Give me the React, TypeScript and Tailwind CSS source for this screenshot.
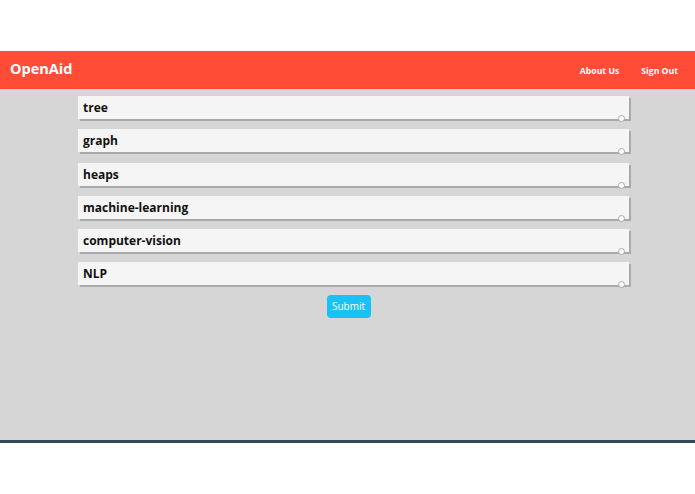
const topics = ["tree", "graph", "heaps", "machine-learning", "computer-vision", "NLP"];

function TopicBox({ label }: { label: string }) {
  return (
    <div className="relative h-[23px] w-[551px] bg-[#f5f5f5] pl-[5px] shadow-[2px_2px_0_#a9a9a9]">
      <span className="block text-[12px] font-bold leading-[24px] text-[#111]">{label}</span>
      <span className="absolute -bottom-[3px] right-[4px] h-[7px] w-[7px] rounded-full border border-[#a9a9a9] bg-white" />
    </div>
  );
}

export default function App() {
  return (
    <div className="h-[494px] w-[695px] bg-white font-['Open_Sans',sans-serif]">
      <div className="h-[51px]" />
      <header className="flex h-[38px] items-center justify-between bg-[#fe4c37] pl-[10px] pr-[17px] text-white">
        <span className="-mt-[2px] text-[14.5px] font-bold">OpenAid</span>
        <nav className="mt-[3px] flex gap-[22px] text-[8.7px] font-bold">
          <span>About Us</span>
          <span>Sign Out</span>
        </nav>
      </header>
      <main className="flex h-[354px] flex-col border-b-[3px] border-[#34495a] bg-[#d6d6d6] pt-[7px]">
        <div className="ml-[78px] flex flex-col gap-[10.3px]">
          {topics.map((t) => (
            <TopicBox key={t} label={t} />
          ))}
        </div>
        <div className="mt-[10px] flex justify-center">
          <button className="ml-[2px] h-[23px] w-[44px] rounded-[4px] bg-[#1bc0f6] text-[10px] text-white">
            Submit
          </button>
        </div>
      </main>
    </div>
  );
}
